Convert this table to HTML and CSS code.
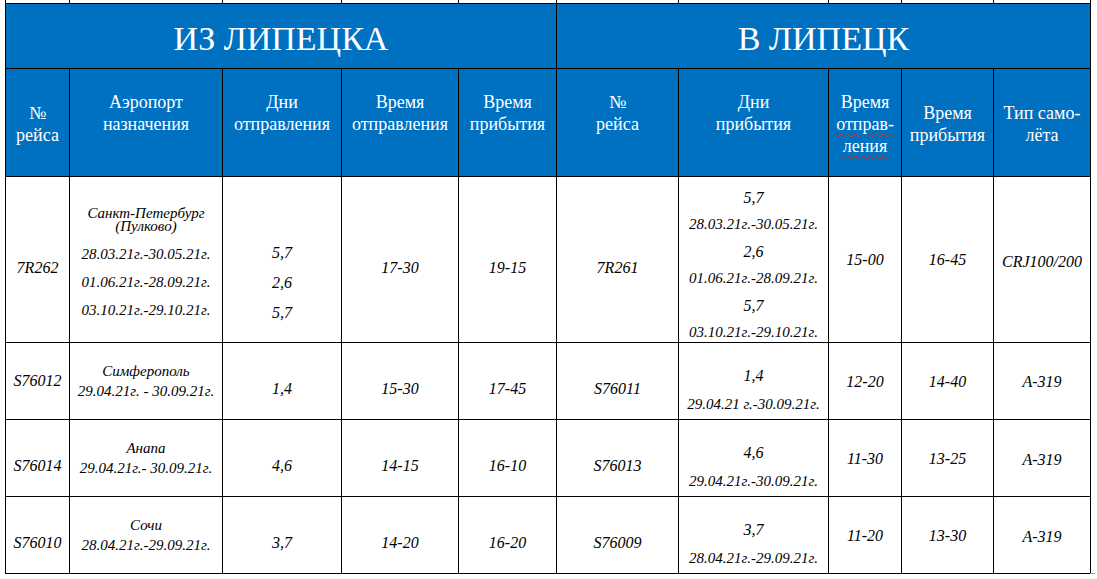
FILE: index.html
```html
<!DOCTYPE html>
<html lang="ru">
<head>
<meta charset="utf-8">
<title>Расписание рейсов Липецк</title>
<link rel="stylesheet" href="styles.css">
</head>
<body>
<div class="page">
  <table class="schedule">
    <colgroup>
      <col class="w1"><col class="w2"><col class="w3"><col class="w4"><col class="w5">
      <col class="w6"><col class="w7"><col class="w8"><col class="w9"><col class="w10">
    </colgroup>
    <tbody>
      <tr class="stub">
        <td></td><td></td><td></td><td></td><td></td><td></td><td></td><td></td><td></td><td></td>
      </tr>
      <tr class="title">
        <th colspan="5"><span class="tx">ИЗ ЛИПЕЦКА</span></th>
        <th colspan="5"><span class="tx">В ЛИПЕЦК</span></th>
      </tr>
      <tr class="head">
        <th><span class="tx">№<br>рейса</span></th>
        <th class="lift"><span class="tx">Аэропорт<br>назначения</span></th>
        <th class="lift"><span class="tx">Дни<br>отправления</span></th>
        <th class="lift"><span class="tx">Время<br>отправления</span></th>
        <th class="lift"><span class="tx">Время<br>прибытия</span></th>
        <th class="lift"><span class="tx">№<br>рейса</span></th>
        <th class="lift"><span class="tx">Дни<br>прибытия</span></th>
        <th><span class="tx line">Время</span><span class="tx line"><span class="spell">отправ-</span></span><span class="tx line"><span class="spell">ления</span></span></th>
        <th><span class="tx">Время<br>прибытия</span></th>
        <th><span class="tx">Тип само-<br>лёта</span></th>
      </tr>
      <tr class="r1">
        <td class="low"><span class="tx">7R262</span></td>
        <td class="dest dest--long">
          <span class="place place--small">Санкт-Петербург<br>(Пулково)</span>
          <span class="date date--wide">28.03.21г.-30.05.21г.</span>
          <span class="date date--wide">01.06.21г.-28.09.21г.</span>
          <span class="date date--wide">03.10.21г.-29.10.21г.</span>
        </td>
        <td class="days-list">
          <span class="tx line">5,7</span>
          <span class="tx line">2,6</span>
          <span class="tx line">5,7</span>
        </td>
        <td class="low"><span class="tx">17-30</span></td>
        <td class="low"><span class="tx">19-15</span></td>
        <td class="low"><span class="tx">7R261</span></td>
        <td class="tall">
          <div class="tall__stack">
            <span class="tx line">5,7</span>
            <span class="tx line date">28.03.21г.-30.05.21г.</span>
            <span class="tx line">2,6</span>
            <span class="tx line date">01.06.21г.-28.09.21г.</span>
            <span class="tx line">5,7</span>
            <span class="tx line date">03.10.21г.-29.10.21г.</span>
          </div>
        </td>
        <td class="slight"><span class="tx">15-00</span></td>
        <td class="slight"><span class="tx">16-45</span></td>
        <td class="slight2"><span class="tx">CRJ100/200</span></td>
      </tr>
      <tr class="r2">
        <td><span class="tx">S76012</span></td>
        <td class="dest">
          <span class="place">Симферополь</span>
          <span class="date">29.04.21г. - 30.09.21г.</span>
        </td>
        <td class="low"><span class="tx">1,4</span></td>
        <td class="low"><span class="tx">15-30</span></td>
        <td class="low"><span class="tx">17-45</span></td>
        <td class="low"><span class="tx">S76011</span></td>
        <td class="pair">
          <span class="tx line">1,4</span>
          <span class="tx line date">29.04.21 г.-30.09.21г.</span>
        </td>
        <td class="slight"><span class="tx">12-20</span></td>
        <td class="slight"><span class="tx">14-40</span></td>
        <td class="slight"><span class="tx">A-319</span></td>
      </tr>
      <tr class="r3">
        <td class="low"><span class="tx">S76014</span></td>
        <td class="dest">
          <span class="place">Анапа</span>
          <span class="date">29.04.21г.- 30.09.21г.</span>
        </td>
        <td class="low"><span class="tx">4,6</span></td>
        <td class="low"><span class="tx">14-15</span></td>
        <td class="low"><span class="tx">16-10</span></td>
        <td class="low"><span class="tx">S76013</span></td>
        <td class="pair">
          <span class="tx line">4,6</span>
          <span class="tx line date">29.04.21г.-30.09.21г.</span>
        </td>
        <td class="slight"><span class="tx">11-30</span></td>
        <td class="slight"><span class="tx">13-25</span></td>
        <td class="slight2"><span class="tx">A-319</span></td>
      </tr>
      <tr class="r4">
        <td class="low"><span class="tx">S76010</span></td>
        <td class="dest">
          <span class="place">Сочи</span>
          <span class="date">28.04.21г.-29.09.21г.</span>
        </td>
        <td class="low"><span class="tx">3,7</span></td>
        <td class="low"><span class="tx">14-20</span></td>
        <td class="low"><span class="tx">16-20</span></td>
        <td class="low"><span class="tx">S76009</span></td>
        <td class="pair">
          <span class="tx line">3,7</span>
          <span class="tx line date">28.04.21г.-29.09.21г.</span>
        </td>
        <td class="slight"><span class="tx">11-20</span></td>
        <td class="slight"><span class="tx">13-30</span></td>
        <td class="slight2"><span class="tx">A-319</span></td>
      </tr>
    </tbody>
  </table>
</div>
</body>
</html>
```

FILE: styles.css
```css
html, body {
  margin: 0;
  padding: 0;
  background: #ffffff;
}

body,
.page,
.schedule,
.schedule * {
  font-family: "Liberation Serif", "Times New Roman", serif;
  color: #000000;
}

.schedule .tx,
.schedule .place,
.schedule .date,
.schedule .spell {
  font-family: "Liberation Serif", "Times New Roman", serif;
}

.page {
  position: relative;
  padding-left: 5px;
  width: 1092px;
}

.page::after {
  content: "";
  position: absolute;
  left: 1090px;
  top: 573px;
  width: 4px;
  height: 6px;
  border-left: 1px solid #a0a0a0;
  border-top: 1px solid #a0a0a0;
}

.schedule {
  border-collapse: collapse;
  table-layout: fixed;
  width: 1086px;
}

.w1 { width: 64px; }
.w2 { width: 153px; }
.w3 { width: 119px; }
.w4 { width: 117px; }
.w5 { width: 98px; }
.w6 { width: 122px; }
.w7 { width: 150px; }
.w8 { width: 73px; }
.w9 { width: 92px; }
.w10 { width: 97px; }

.schedule th,
.schedule td {
  border: 1px solid #000000;
  padding: 0 2px;
  text-align: center;
  vertical-align: middle;
}

.schedule td {
  font-style: italic;
  font-size: 16px;
  line-height: 20px;
}

.line {
  display: block;
}

/* partial row of the previous page, cut off at the top */
.stub { height: 3px; }
.stub td {
  border-top: none;
  padding: 0;
  font-size: 0;
  line-height: 0;
}

.title { height: 65px; }
.schedule .title th {
  background: #0070c0;
  font-weight: normal;
  font-size: 34px;
  line-height: 36px;
  padding-top: 6px;
}

.head { height: 108px; }
.schedule .title th,
.schedule .title th *,
.schedule .head th,
.schedule .head th * {
  color: #ffffff;
}
.schedule .head th {
  background: #0070c0;
  font-weight: normal;
  font-size: 18px;
  line-height: 22px;
  padding-top: 3px;
}

.schedule .head th.lift {
  padding-top: 0;
  padding-bottom: 19px;
}

.spell {
  text-decoration: underline wavy #c0392b;
  text-decoration-thickness: 1px;
  text-underline-offset: 3px;
}

.r1 { height: 166px; }
.r2 { height: 77px; }
.r3 { height: 77px; }
.r4 { height: 76px; }

.schedule td.low { padding-top: 17px; }
.schedule td.slight { padding-top: 2px; }
.schedule td.slight2 { padding-top: 5px; }

.dest .place,
.dest .date {
  display: block;
}

.dest { line-height: 26px; }
.dest .place { font-size: 15px; }
.date { font-size: 15px; }

.schedule td.dest--long { padding-top: 12px; }
.dest--long .place--small {
  font-size: 15px;
  line-height: 13px;
  margin-bottom: 7px;
}
.dest--long .date--wide { line-height: 28px; }

.schedule td.days-list {
  padding-top: 48px;
  line-height: 30px;
}

.schedule td.tall {
  vertical-align: top;
  padding-top: 7px;
}
.tall__stack {
  height: 150px;
  line-height: 27px;
}

.schedule td.pair {
  padding-top: 18px;
  line-height: 29px;
}
```
